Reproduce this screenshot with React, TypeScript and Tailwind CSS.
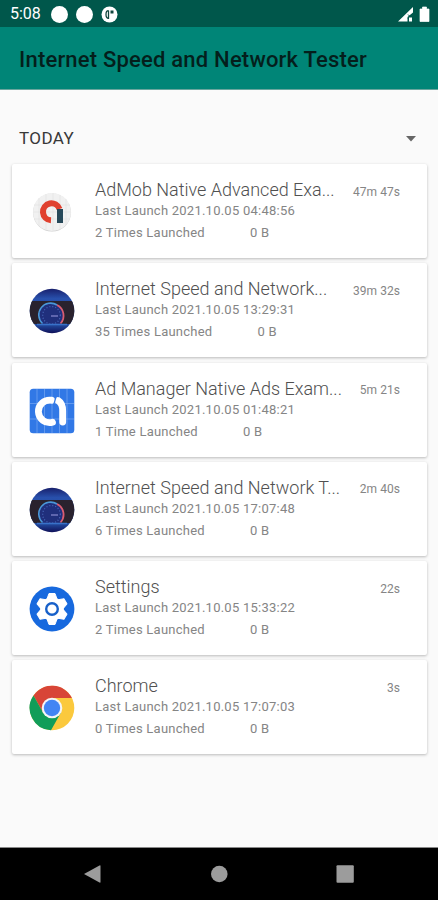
import React from "react";

type Entry = {
  name: string;
  last: string;
  count: string;
  time: string;
  icon: () => React.ReactElement;
};

const AdMobIcon = () => (
  <svg viewBox="0 0 46 46" className="h-[46px] w-[46px]">
    <circle cx="23" cy="23.6" r="19" fill="#cfcfcf" />
    <circle cx="23" cy="23" r="19" fill="#f1f1f1" />
    <path d="M10 9V37M17 5V41M24 4V42M31 6V40M37 10V36M5 16H41M4 23H42M5 30H41" stroke="#e0e0e0" strokeWidth=".6" />
    <path d="M22 31.300A8.500 8.500 0 1 1 30.500 20" fill="none" stroke="#e0412f" strokeWidth="6" />
    <path d="M28 20h6v14h-6z" fill="#264859" />
  </svg>
);

const SpeedIcon = () => (
  <svg viewBox="0 0 46 46" className="h-[46px] w-[46px]">
    <defs>
      <clipPath id="speedClip"><circle cx="23" cy="23" r="22.300" /></clipPath>
      <linearGradient id="speedBg" x1="0" y1="0" x2="0" y2="1">
        <stop offset="0" stopColor="#171c67" />
        <stop offset=".23" stopColor="#2850ac" />
        <stop offset=".8" stopColor="#224b9f" />
        <stop offset="1" stopColor="#0e0b52" />
      </linearGradient>
    </defs>
    <g clipPath="url(#speedClip)">
      <path d="M0 0h46v46H0z" fill="url(#speedBg)" />
      <path d="M0 13H46V36H0z" fill="#29222e" />
      <path d="M13.500 36A12.500 12.500 0 1 1 31.500 36Z" fill="#202f7c" />
      <path d="M13.500 35.500A11.800 11.800 0 0 1 28 17" fill="none" stroke="#4a97d8" strokeWidth="1.600" />
      <path d="M28 17A11.800 11.800 0 0 1 31.500 35.500" fill="none" stroke="#d95c70" strokeWidth="1.800" />
      <circle cx="22.500" cy="27.300" r="8.800" fill="none" stroke="#4766b8" strokeWidth="1.200" strokeDasharray="1 2" />
      <path d="M22 28h7" stroke="#9b9ce0" strokeWidth="1.200" />
      <path d="M8 36.500h30" stroke="#3871c8" strokeWidth="1.500" />
    </g>
  </svg>
);

const AdManagerIcon = () => (
  <svg viewBox="0 0 46 46" className="h-[46px] w-[46px]">
    <rect x=".7" y=".7" width="44.600" height="44.600" rx="3.500" fill="#3178e6" />
    <path d="M8 1V45M15.500 1V45M23 1V45M30.500 1V45M38 1V45M1 15.500H45M1 31H45" stroke="#79a8f0" strokeWidth=".7" />
    <path d="M23.500 34.300A11.300 11.300 0 1 1 22.500 12.200" fill="none" stroke="#fff" strokeWidth="6.800" strokeLinecap="round" />
    <path d="M29 12.500C32.200 14.500 33.700 18 33.700 23V34" fill="none" stroke="#fff" strokeWidth="6.800" strokeLinecap="round" />
    <path d="M24.500 17.500L27 9" stroke="#3178e6" strokeWidth="1.200" />
  </svg>
);

const SettingsIcon = () => (
  <svg viewBox="0 0 46 46" className="h-[46px] w-[46px]">
    <circle cx="23" cy="23" r="22.400" fill="#1769de" />
    <g fill="#fff">
      <circle cx="23" cy="23" r="11.800" />
      {[0, 60, 120, 180, 240, 300].map((a) => (
        <path key={a} d="M18 13L20 7.500H26L28 13Z" stroke="#fff" strokeWidth="1" strokeLinejoin="round" transform={`rotate(${a} 23 23)`} />
      ))}
    </g>
    <circle cx="23" cy="23" r="5.800" fill="#fff" stroke="#1760c9" strokeWidth="2.400" />
  </svg>
);

const ChromeIcon = () => (
  <svg viewBox="0 0 46 46" className="h-[46px] w-[46px]">
    <circle cx="23" cy="23" r="22.300" fill="#fbc93d" />
    <path d="M23 13H42.900A22.300 22.300 0 0 0 4.500 10.500L14.300 28Z" fill="#d84537" />
    <path d="M14.300 28L4.500 10.500A22.300 22.300 0 0 0 22 45.300L31.700 28Z" fill="#119d59" />
    <circle cx="23" cy="23" r="10.300" fill="#f5f5f5" />
    <circle cx="23" cy="23" r="8.200" fill="#4285f4" />
  </svg>
);

const entries: Entry[] = [
  { name: "AdMob Native Advanced Exa...", last: "2021.10.05 04:48:56", count: "2 Times", time: "47m 47s", icon: AdMobIcon },
  { name: "Internet Speed and Network...", last: "2021.10.05 13:29:31", count: "35 Times", time: "39m 32s", icon: SpeedIcon },
  { name: "Ad Manager Native Ads Exam...", last: "2021.10.05 01:48:21", count: "1 Time", time: "5m 21s", icon: AdManagerIcon },
  { name: "Internet Speed and Network T...", last: "2021.10.05 17:07:48", count: "6 Times", time: "2m 40s", icon: SpeedIcon },
  { name: "Settings", last: "2021.10.05 15:33:22", count: "2 Times", time: "22s", icon: SettingsIcon },
  { name: "Chrome", last: "2021.10.05 17:07:03", count: "0 Times", time: "3s", icon: ChromeIcon },
];

const Card = ({ entry }: { entry: Entry }) => (
  <li className="flex h-[94px] rounded-[2px] bg-white pl-[17px] pr-[27px] shadow-[0_1px_3px_rgba(0,0,0,0.26)]">
    <div className="mt-[25px] shrink-0">
      <entry.icon />
    </div>
    <div className="ml-5 min-w-0 flex-1 whitespace-nowrap pt-[14px] text-[#858585]">
      <div className="flex h-6 items-center justify-between">
        <h2 className="text-[18px] font-light leading-6 text-[#505050]">{entry.name}</h2>
        <span className="pt-[3px] text-[12px] leading-5 tracking-[0.05px]">{entry.time}</span>
      </div>
      <p className="text-[13px] leading-[18px] tracking-[0.24px]">Last Launch {entry.last}</p>
      <div className="mt-[4px] flex gap-[45px] text-[13px] leading-[18px] tracking-[0.24px]">
        <span>{entry.count} Launched</span>
        <span>0 B</span>
      </div>
    </div>
  </li>
);

export default function App() {
  return (
    <div className="flex h-[900px] w-[438px] flex-col overflow-hidden bg-[#fafafa] font-[Roboto,sans-serif]">
      <div className="flex h-[27px] shrink-0 items-center bg-[#00574b] pl-[10px] pr-[7px] pt-px text-white">
        <span className="w-[41px] text-[16px] leading-5">5:08</span>
        <i className="h-[17px] w-[17px] rounded-full bg-white" />
        <i className="ml-2 h-[17px] w-[17px] rounded-full bg-white" />
        <svg viewBox="0 0 17 17" className="ml-2 h-[17px] w-[17px]">
          <circle cx="8.500" cy="8.500" r="8" fill="#fff" />
          <path d="M7.500 4.700Q5 4.700 5 8.500T7.500 12.300M7.500 4.500V13" fill="none" stroke="#12473f" strokeWidth="1.300" />
          <path d="M9.500 4.500h3v3h-3z" fill="#12473f" />
        </svg>
        <svg viewBox="0 0 34 17" className="ml-auto h-[17px] w-[34px]">
          <path d="M1 15.500L16 1V6.500L10.500 11V15.500Z" fill="#fff" />
          <path d="M11 8.500L15 12.500M15 8.500L11 12.500" stroke="#00574b" strokeWidth="1" />
          <path d="M12 11.500h3v4h-3z" fill="#fff" />
          <path d="M23 3h2.500V1h4v2H32v12.500h-9z" fill="#fff" stroke="#fff" strokeWidth=".7" strokeLinejoin="round" />
        </svg>
      </div>
      <header className="flex h-[63px] shrink-0 items-center border-b border-[#6aa69e] bg-[#008577] pl-[19px]">
        <h1 className="mt-[4px] whitespace-nowrap text-[22px] font-medium leading-7 tracking-[0.2px] text-[#041f1c]">Internet Speed and Network Tester</h1>
      </header>
      <main className="flex-1 pl-[12px] pr-[11px] pt-[33px]">
        <div className="flex h-[31px] items-center justify-between pl-[7px] pr-[11px]">
          <span className="-mt-px text-[17px] leading-6 tracking-[0.4px] text-[#383838]">TODAY</span>
          <svg viewBox="0 0 10 6" className="h-[6px] w-[10px]"><path d="M0 0h10L5 5.500Z" fill="#666" /></svg>
        </div>
        <ul className="mt-[10px] flex flex-col gap-[5.300px]">
          {entries.map((entry, i) => <Card key={i} entry={entry} />)}
        </ul>
      </main>
      <nav className="h-[53px] shrink-0 border-t border-[#888] bg-black">
        <svg viewBox="0 0 438 52" className="h-[52px] w-[438px]" fill="#9c9c9c">
          <path d="M84 26L99.500 17.500Q100.500 17 100.500 18V34Q100.500 35 99.500 34.500Z" />
          <circle cx="219.300" cy="26" r="8.300" />
          <rect x="336.500" y="17.200" width="17.300" height="17.600" rx="1" />
        </svg>
      </nav>
    </div>
  );
}
